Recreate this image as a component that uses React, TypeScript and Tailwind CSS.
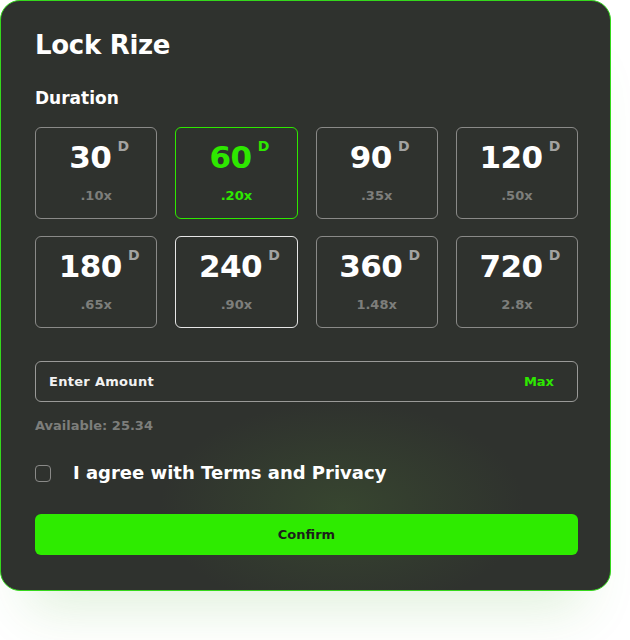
import React, { useState } from 'react';

const durations = [
  { days: 30, rate: '.10x' },
  { days: 60, rate: '.20x' },
  { days: 90, rate: '.35x' },
  { days: 120, rate: '.50x' },
  { days: 180, rate: '.65x' },
  { days: 240, rate: '.90x' },
  { days: 360, rate: '1.48x' },
  { days: 720, rate: '2.8x' },
];

const wide = { fontFamily: '"DejaVu Sans", sans-serif' };

const App = () => {
  const [selected, setSelected] = useState(60);
  const [agreed, setAgreed] = useState(false);

  return (
    <div className="min-h-screen bg-white">
      <div
        className="w-[611px] h-[591px] rounded-[20px] border border-[#35d81c] bg-[#2f322e] bg-[radial-gradient(ellipse_30%_18%_at_56%_86%,rgba(70,105,50,0.35),transparent)] pl-[34px] pr-[32px] pt-[27px] shadow-[0_45px_50px_-28px_rgba(60,170,40,0.16)]"
        style={wide}
      >
        <h1 className="text-[26px] font-bold text-white leading-[34px] tracking-[-0.3px]">Lock Rize</h1>
        <h2 className="mt-[24px] text-[17px] font-bold text-white leading-[24px]">Duration</h2>

        <div className="mt-[17px] grid grid-cols-4 gap-x-[18px] gap-y-[17px]">
          {durations.map((d) => {
            const active = d.days === selected;
            const hover = d.days === 240;
            return (
              <button
                key={d.days}
                onClick={() => setSelected(d.days)}
                className={`h-[92px] rounded-[6px] border flex flex-col items-center pt-[9px] ${
                  active ? 'border-[#2ee800]' : hover ? 'border-[#e6e6e6]' : 'border-[#8a8a88]'
                }`}
              >
                <div className="flex items-start pl-[6px]">
                  <span className={`text-[31px] font-bold leading-[40px] tracking-[-0.5px] ${active ? 'text-[#2ee800]' : 'text-white'}`}>
                    {d.days}
                  </span>
                  <span className={`ml-[6px] text-[14px] font-bold leading-[18px] ${active ? 'text-[#2ee800]' : 'text-[#a3a3a1]'}`}>
                    D
                  </span>
                </div>
                <span className={`mt-[11px] text-[13px] font-bold leading-[16px] ${active ? 'text-[#2ee800]' : 'text-[#7d7e7b]'}`}>
                  {d.rate}
                </span>
              </button>
            );
          })}
        </div>

        <div className="mt-[33px] h-[41px] rounded-[6px] border border-[#9a9a98] flex items-center justify-between pl-[13px] pr-[23px]">
          <span className="text-[13px] font-bold text-[#f2f2f2] tracking-[0.3px]">Enter Amount</span>
          <span className="text-[13px] font-bold text-[#2ee800]">Max</span>
        </div>

        <p className="mt-[15px] text-[13px] font-bold text-[#7d7e7b] leading-[18px]">Available: 25.34</p>

        <label className="mt-[26px] flex items-center cursor-pointer">
          <input
            type="checkbox"
            checked={agreed}
            onChange={(e) => setAgreed(e.target.checked)}
            className="appearance-none w-[16px] h-[17px] rounded-[4px] border border-[#8a8a88] bg-transparent checked:bg-[#2eeb00] checked:border-[#2eeb00]"
          />
          <span className="ml-[22px] text-[18px] font-bold text-white leading-[24px]">
            I agree with Terms and Privacy
          </span>
        </label>

        <button className="mt-[29px] w-full h-[41px] rounded-[6px] bg-[#2eeb00] text-[13px] font-semibold text-[#1c1f1a]">
          Confirm
        </button>
      </div>
    </div>
  );
};

export default App;
